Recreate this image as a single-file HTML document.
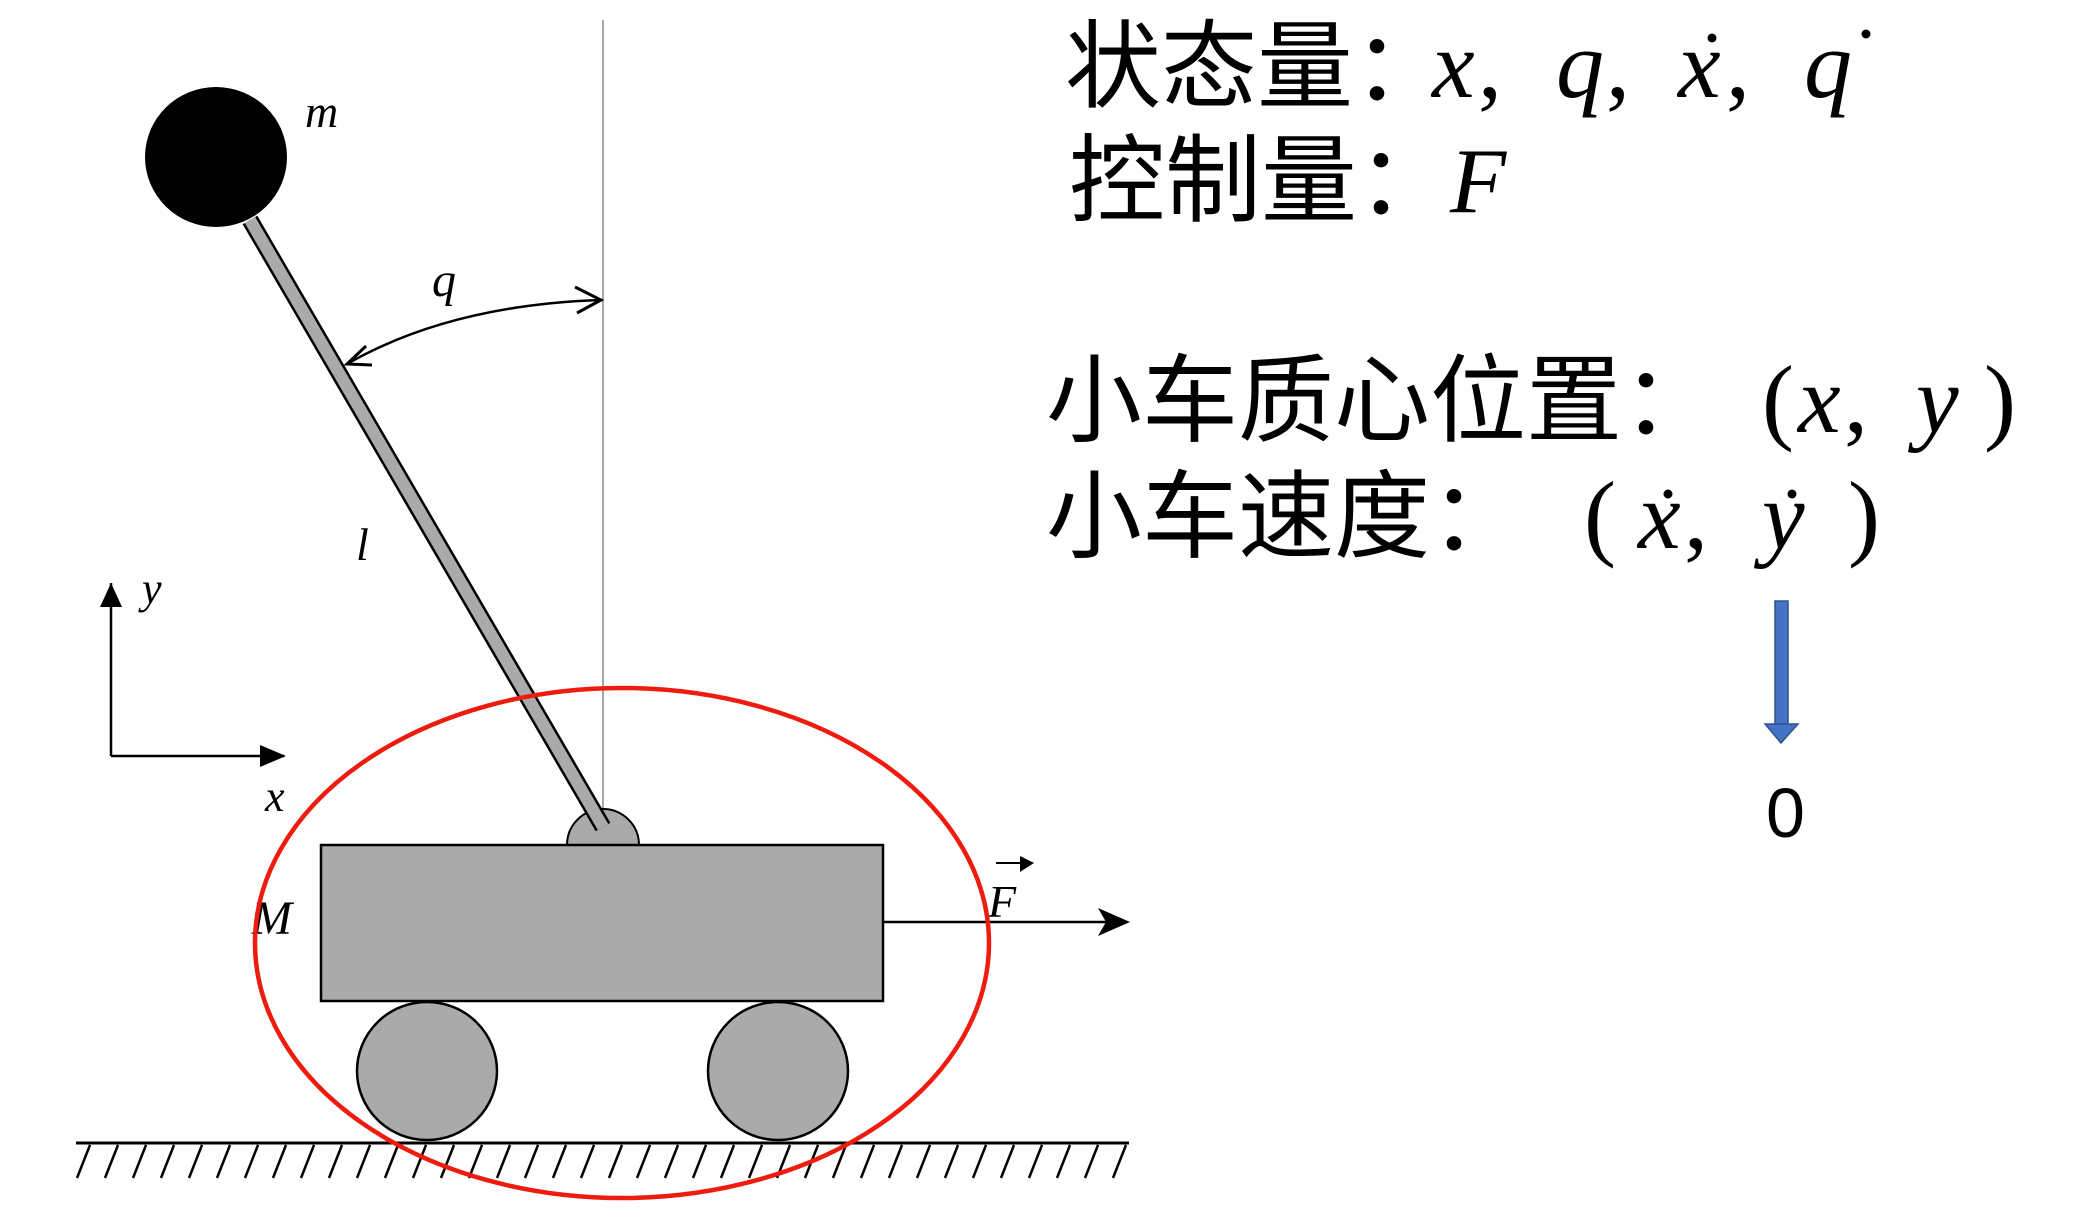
<!DOCTYPE html>
<html><head><meta charset="utf-8"><style>
html,body{margin:0;padding:0;background:#fff;width:2092px;height:1218px;overflow:hidden}
svg{display:block}
.cj{font-family:"Liberation Sans","Noto Sans CJK SC",sans-serif;font-size:96px;fill:#000}
.m{font-family:"Liberation Serif",serif;font-style:italic;fill:#000}
</style></head><body>
<svg width="2092" height="1218" viewBox="0 0 2092 1218" xmlns="http://www.w3.org/2000/svg">
<line x1="603" y1="20" x2="603" y2="827" stroke="#777" stroke-width="1.3"/>
<path d="M567,845 A36,36 0 0 1 639,845 Z" fill="#aaa" stroke="#000" stroke-width="2"/>
<line x1="250" y1="220" x2="603" y2="827" stroke="#000" stroke-width="17"/>
<line x1="250" y1="220" x2="603" y2="827" stroke="#aaa" stroke-width="12"/>
<ellipse cx="216" cy="157" rx="71" ry="70" fill="#000"/>
<text class="m" x="305" y="127" font-size="46">m</text>
<path d="M347,364 Q450,305 601,300" fill="none" stroke="#000" stroke-width="2.5"/>
<path d="M366,346 L347,364 L372,365" fill="none" stroke="#000" stroke-width="3"/>
<path d="M575,287 L601,300 L577,313" fill="none" stroke="#000" stroke-width="3"/>
<text class="m" x="432" y="296" font-size="48">q</text>
<text class="m" x="356" y="560" font-size="46">l</text>
<line x1="111" y1="756" x2="111" y2="583" stroke="#000" stroke-width="2.5"/>
<path d="M100,607 L111,583 L122,607" fill="#000"/>
<line x1="111" y1="756" x2="284" y2="756" stroke="#000" stroke-width="2.5"/>
<path d="M260,745 L286,756 L260,767" fill="#000"/>
<text class="m" x="142" y="603" font-size="44">y</text>
<text class="m" x="265" y="811" font-size="44">x</text>
<rect x="321" y="845" width="562" height="156" fill="#aaa" stroke="#000" stroke-width="2.5"/>
<ellipse cx="427" cy="1071" rx="70" ry="69" fill="#aaa" stroke="#000" stroke-width="2.5"/>
<ellipse cx="778" cy="1071" rx="70" ry="69" fill="#aaa" stroke="#000" stroke-width="2.5"/>
<text class="m" x="252" y="934" font-size="48">M</text>
<line x1="76" y1="1143" x2="1129" y2="1143" stroke="#000" stroke-width="3"/>
<g stroke="#000" stroke-width="2.5">
<path d="M90,1145 L77,1178 M118,1145 L105,1178 M146,1145 L133,1178 M174,1145 L161,1178 M202,1145 L189,1178 M230,1145 L217,1178 M258,1145 L245,1178 M286,1145 L273,1178 M314,1145 L301,1178 M342,1145 L329,1178 M370,1145 L357,1178 M398,1145 L385,1178 M426,1145 L413,1178 M454,1145 L441,1178 M482,1145 L469,1178 M510,1145 L497,1178 M538,1145 L525,1178 M566,1145 L553,1178 M594,1145 L581,1178 M622,1145 L609,1178 M650,1145 L637,1178 M678,1145 L665,1178 M706,1145 L693,1178 M734,1145 L721,1178 M762,1145 L749,1178 M790,1145 L777,1178 M818,1145 L805,1178 M846,1145 L833,1178 M874,1145 L861,1178 M902,1145 L889,1178 M930,1145 L917,1178 M958,1145 L945,1178 M986,1145 L973,1178 M1014,1145 L1001,1178 M1042,1145 L1029,1178 M1070,1145 L1057,1178 M1098,1145 L1085,1178 M1126,1145 L1113,1178"/>
</g>
<line x1="883" y1="922" x2="1125" y2="922" stroke="#000" stroke-width="2.5"/>
<path d="M1098,908 L1130,922 L1098,936 L1106,922 Z" fill="#000"/>
<text class="m" x="988" y="917" font-size="46">F</text>
<line x1="996" y1="863" x2="1024" y2="863" stroke="#000" stroke-width="2"/>
<path d="M1020,856 L1034,863 L1020,872 Z" fill="#000"/>
<ellipse cx="622" cy="943" rx="367" ry="255" fill="none" stroke="#ee1c0e" stroke-width="4.5"/>

<text class="cj" x="1065" y="100">状态量：</text>
<text class="m" font-size="96" y="97"><tspan x="1432">x</tspan><tspan x="1478" font-style="normal">,</tspan><tspan x="1556">q</tspan><tspan x="1606" font-style="normal">,</tspan><tspan x="1678">x</tspan><tspan x="1726" font-style="normal">,</tspan><tspan x="1804">q</tspan></text>
<circle cx="1712" cy="38" r="4.5" fill="#000"/>
<circle cx="1866" cy="34" r="4.5" fill="#000"/>
<text class="cj" x="1069" y="214">控制量：</text>
<text class="m" x="1450" y="212" font-size="92">F</text>

<text class="cj" x="1046" y="434">小车质心位置：</text>
<text class="m" font-size="96" y="432"><tspan x="1762" font-style="normal">(</tspan><tspan x="1798">x</tspan><tspan x="1844" font-style="normal">,</tspan><tspan x="1916">y</tspan><tspan x="1984" font-style="normal">)</tspan></text>
<text class="cj" x="1046" y="550">小车速度：</text>
<text class="m" font-size="96" y="548"><tspan x="1584" font-style="normal">(</tspan><tspan x="1638">x</tspan><tspan x="1684" font-style="normal">,</tspan><tspan x="1762">y</tspan><tspan x="1848" font-style="normal">)</tspan></text>
<circle cx="1668" cy="494" r="4.5" fill="#000"/>
<circle cx="1792" cy="494" r="4.5" fill="#000"/>

<rect x="1775" y="601" width="13" height="124" fill="#4472c4" stroke="#2f528f" stroke-width="1.5"/>
<path d="M1765,724 L1798,724 L1781,743 Z" fill="#4472c4" stroke="#2f528f" stroke-width="1.5"/>
<text x="1766" y="837" font-family="Liberation Sans, sans-serif" font-size="70" fill="#000">0</text>
</svg>
</body></html>
